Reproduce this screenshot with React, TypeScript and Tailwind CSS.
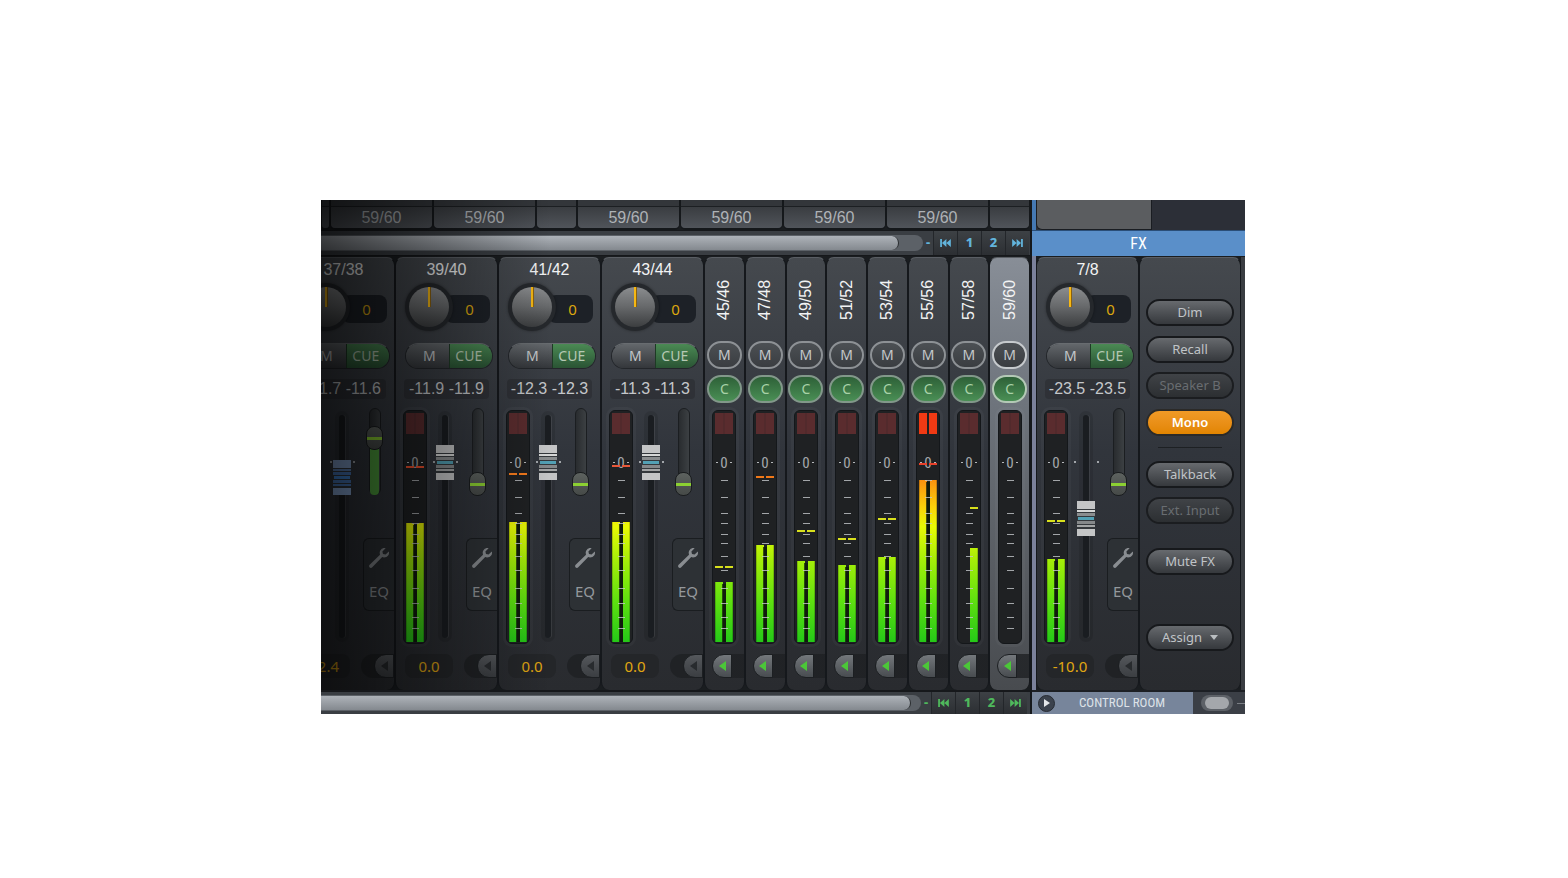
import { useId, useState } from 'react';
import clsx from 'clsx';

type MeterData = { left?: number; right?: number; peakL?: number; peakR?: number; peakColor?: string; clip?: boolean };
type Channel = { name: string; meter?: MeterData };
type WideChannel = Channel & { pan: string; levels: string; gain: string; fader: number; send: number; lit?: boolean; blue?: boolean };

const WIDE: WideChannel[] = [
  { name: '37/38', pan: '0', levels: '-11.7 -11.6', gain: '-2.4', fader: 69, send: 30, lit: true, blue: true },
  { name: '39/40', pan: '0', levels: '-11.9 -11.9', gain: '0.0', fader: 54, send: 76, meter: { left: 111, right: 111, peakL: 55, peakR: 55, peakColor: '#f0502c' } },
  { name: '41/42', pan: '0', levels: '-12.3 -12.3', gain: '0.0', fader: 54, send: 76, meter: { left: 110, right: 110, peakL: 62, peakR: 62, peakColor: '#f87c1c' } },
  { name: '43/44', pan: '0', levels: '-11.3 -11.3', gain: '0.0', fader: 54, send: 76, meter: { left: 110, right: 110, peakL: 54, peakR: 54, peakColor: '#e8583a' } },
];

const NARROW: Channel[] = [
  { name: '45/46', meter: { left: 170, right: 170, peakL: 155, peakR: 155 } },
  { name: '47/48', meter: { left: 133, right: 133, peakL: 65, peakR: 65, peakColor: '#f07818' } },
  { name: '49/50', meter: { left: 149, right: 149, peakL: 119, peakR: 119 } },
  { name: '51/52', meter: { left: 153, right: 153, peakL: 127, peakR: 127 } },
  { name: '53/54', meter: { left: 145, right: 145, peakL: 107, peakR: 107 } },
  { name: '55/56', meter: { left: 68, right: 68, peakL: 52, peakR: 52, peakColor: '#e8402a', clip: true } },
  { name: '57/58', meter: { right: 136, peakR: 96 } },
  { name: '59/60', meter: {} },
];

const MASTER: WideChannel = {
  name: '7/8', pan: '0', levels: '-23.5 -23.5', gain: '-10.0', fader: 110, send: 76,
  meter: { left: 147, right: 147, peakL: 109, peakR: 109 },
};

const TICKS = [69, 86, 102, 112, 123, 132, 145, 159, 177, 192, 206, 217];

const STRIP = 'border-x border-t border-x-[#15181c] border-t-[#5a5e64] rounded-lg flex flex-col';
const STRIP_BG = 'bg-linear-to-b from-[#45494e] via-[#31353c] via-45% to-[#292b2f]';

function Meter({ left, right, peakL, peakR, peakColor = '#d8e01c', clip }: MeterData) {
  const id = useId();
  const clipFill = clip ? '#f03a14' : '#5a2c2e';
  return (
    <div className="w-6 h-[234px] shrink-0 rounded-md border border-[#14171a] bg-[#1f2123] shadow-[0_0_0_3px_#ffffff08] flex justify-center pt-px">
      <svg width="18" height="230" viewBox="0 0 18 230" aria-hidden="true">
        <defs>
          <linearGradient id={id} gradientUnits="userSpaceOnUse" x1="0" y1="65" x2="0" y2="230">
            <stop offset="0" stopColor="#fa8a10" />
            <stop offset="0.18" stopColor="#fbd00a" />
            <stop offset="0.3" stopColor="#e9fa05" />
            <stop offset="0.5" stopColor="#a6ee08" />
            <stop offset="0.75" stopColor="#5fe010" />
            <stop offset="1" stopColor="#25c818" />
          </linearGradient>
        </defs>
        <rect x="0" y="1" width="8" height="21" fill={clipFill} />
        <rect x="10" y="1" width="8" height="21" fill={clipFill} />
        {!clip && <rect x="8" y="1" width="2" height="21" fill="#522a2c" />}
        <text x="9" y="56" textAnchor="middle" fontSize="15" fill="#a4a8ac" className="font-['Roboto_Condensed','Roboto',sans-serif]">0</text>
        <rect x="1" y="50" width="2" height="1" fill="#b5b8bb" />
        <rect x="15" y="50" width="2" height="1" fill="#b5b8bb" />
        {left && (
          <>
            <rect x="0" y={left} width="8" height={230 - left} fill={`url(#${id})`} />
            <rect x="0" y={left} width="1" height={230 - left} fill="#000" opacity="0.2" />
            <rect x="7" y={left + 2} width="4" height={228 - left} fill="#0d1a08" opacity="0.75" />
          </>
        )}
        {right && (
          <>
            <rect x={left ? 11 : 10} y={right} width={left ? 7 : 8} height={230 - right} fill={`url(#${id})`} />
            <rect x="17" y={right} width="1" height={230 - right} fill="#000" opacity="0.2" />
          </>
        )}
        {TICKS.map((y) => (
          <rect key={y} x="6" y={y - 1} width="7" height="1" fill="#c4c8ca" opacity="0.8" />
        ))}
        {peakL && <rect x="0" y={peakL - 1} width="8" height="2" fill={peakColor} />}
        {peakR && <rect x="10" y={peakR - 1} width="8" height="2" fill={peakColor} />}
      </svg>
    </div>
  );
}

function Fader({ label, initial, blue }: { label: string; initial: number; blue?: boolean }) {
  const [pos, setPos] = useState(initial);
  return (
    <div className="relative w-7 h-[232px] ml-1 shrink-0">
      <div className="mx-auto mt-[7px] w-1.5 h-[223px] rounded-sm bg-[#1a1d21] shadow-[0_0_0_4px_#0000001a,1px_0_0_#ffffff18]" />
      <svg className="absolute left-0 top-[53px]" width="28" height="2" aria-hidden="true">
        <circle cx="3" cy="1" r="1" fill="#c9cdd0" />
        <circle cx="26" cy="1" r="1" fill="#c9cdd0" />
      </svg>
      <svg className="absolute left-[5px]" style={{ top: pos - 17 }} width="18" height="35" aria-hidden="true">
        <rect width="18" height="35" fill="#34383c" />
        <rect width="18" height="8" fill={blue ? '#86a4d0' : '#c4c5c6'} />
        <rect y="9" width="18" height="2" fill={blue ? '#5d83b8' : '#d6d7d7'} />
        <rect y="12" width="18" height="3" fill={blue ? '#4a7cc0' : '#8a8d8f'} />
        <rect x="1" y="16" width="16" height="3" fill={blue ? '#4288d8' : '#52a0b4'} />
        <rect y="20" width="18" height="3" fill={blue ? '#4a7cc0' : '#85888a'} />
        <rect y="24" width="18" height="2" fill={blue ? '#4a7cc0' : '#a2a4a5'} />
        <rect y="28" width="18" height="7" fill={blue ? '#8fb0e0' : '#c4c5c6'} />
      </svg>
      <input
        type="range"
        aria-label={`${label} fader`}
        min={17}
        max={213}
        value={pos}
        onChange={(e) => setPos(Number(e.target.value))}
        className="absolute inset-0 w-full h-full opacity-0 [writing-mode:vertical-lr]"
      />
    </div>
  );
}

function SendSlider({ label, initial, lit }: { label: string; initial: number; lit?: boolean }) {
  const [pos, setPos] = useState(initial);
  return (
    <div className="relative w-[17px] h-[89px]">
      <div className="mx-auto w-3 h-[87px] rounded-full border border-[#1b1e21] bg-linear-to-r from-[#292c2f] to-[#3c4043]" />
      {lit && <div className="absolute left-1 w-[9px] bottom-0.5 rounded-b-sm bg-[#4fa03e]" style={{ top: pos }} />}
      <div
        className="absolute left-0 w-[17px] h-6 rounded-lg border border-[#1a1d1f] bg-linear-to-b from-[#5d625f] to-[#464a48] flex items-center"
        style={{ top: pos - 12 }}
      >
        <div className="w-full h-[3px] bg-[#8cd032]" />
      </div>
      <input
        type="range"
        aria-label={`${label} send`}
        min={12}
        max={77}
        value={pos}
        onChange={(e) => setPos(Number(e.target.value))}
        className="absolute inset-0 w-full h-full opacity-0 [writing-mode:vertical-lr]"
      />
    </div>
  );
}

function WrenchIcon() {
  return (
    <svg width="22" height="22" viewBox="0 0 22 22" aria-hidden="true">
      <path
        d="M17.6 1.2 14.4 4.4 15 7 17.6 7.600 20.800 4.400C21.800 7.200 19.600 10.400 16 10.400L14.200 10 4 20.600C2.400 21.800 .2 19.600 1.400 18L12 7.800 11.700 6C11.700 2.600 14.800 .2 17.600 1.200Z"
        fill="#898d91"
      />
    </svg>
  );
}

function ArrowTab({ green, wide }: { green?: boolean; wide?: boolean }) {
  return (
    <button
      type="button"
      aria-label="Expand channel"
      className={clsx(
        'h-6 flex',
        wide ? 'w-[33px] justify-end rounded-l-full bg-[#1e2023]/80' : 'w-full pl-[7px] bg-linear-to-r from-transparent from-50% to-[#1e2023]/80 to-50%',
      )}
    >
      <span
        className={clsx(
          'w-5 h-6 rounded-l-full flex items-center justify-center bg-linear-to-b border border-[#1c1f22]',
          green ? 'from-[#74787c] to-[#484c50]' : 'from-[#55585c] to-[#3b3e42]',
        )}
      >
        <svg width="7" height="10" viewBox="0 0 7 10" aria-hidden="true">
          <path d="M7 0v10L0 5z" fill={green ? '#4bc738' : '#282b2e'} />
        </svg>
      </span>
    </button>
  );
}

function WideStrip({ ch }: { ch: WideChannel }) {
  return (
    <section className={clsx(STRIP, STRIP_BG, 'w-[103px] shrink-0 h-[433px]')}>
      <h2 className="h-6 flex items-center justify-center text-base text-[#f2f3f4]">{ch.name}</h2>

      {/* pan */}
      <div className="flex items-center h-[50px] pl-[9px]">
        <div className="relative z-10 size-12 shrink-0 rounded-full bg-[#25282c] flex items-center justify-center shadow-[0_0_3px_#00000066]">
          <div className="size-10 rounded-full bg-linear-to-b from-[#8b8d8f] via-[#66686a] to-[#3c3e40] flex justify-center">
            <div className="w-[3px] h-5 bg-[#f6b814] border-r border-[#8a6110]" />
          </div>
          <input type="range" aria-label={`${ch.name} pan`} className="absolute inset-0 w-full h-full opacity-0" />
        </div>
        <div className="-ml-2 w-[45px] h-7 mt-1 pl-1 rounded-lg bg-[#1d2127] flex items-center justify-center text-[15px] text-[#dca80e] font-['Noto_Sans',sans-serif]">
          {ch.pan}
        </div>
      </div>

      {/* mute / cue */}
      <div className="mt-[11px] ml-[9px] w-[88px] h-[26px] flex rounded-full overflow-hidden border border-[#23262a] border-t-[#686c70] text-sm font-['Noto_Sans',sans-serif]">
        <button type="button" className="flex-1 pl-1 bg-linear-to-b from-[#63676b] to-[#34373b] text-[#c3c7c9]">M</button>
        <button type="button" className="flex-1 pr-1 border-l border-[#1e3a25] bg-linear-to-b from-[#4b8a54] to-[#2a5434] text-[#b6c9b4]">CUE</button>
      </div>

      <div className="mt-2.5 mx-2 h-5 rounded bg-[#292c30]/60 flex items-center justify-center text-base whitespace-nowrap text-[#c4c7ca]">
        {ch.levels}
      </div>

      <div className="mt-[9px] pl-[7px] h-[236px] flex items-start">
        {ch.meter ? <div className="pt-0.5"><Meter {...ch.meter} /></div> : <div className="w-6 shrink-0" />}
        <Fader label={ch.name} initial={ch.fader} blue={ch.blue} />
        <div className="ml-[7px] flex-1">
          <div className="pl-[3px]">
            <SendSlider label={ch.name} initial={ch.send} lit={ch.lit} />
          </div>
          <div className="mt-[41px] h-[73px] rounded-l-md border border-r-0 border-[#1a1d20] bg-[#2d3135] flex flex-col items-center">
            <button type="button" aria-label="Channel settings" className="mt-2"><WrenchIcon /></button>
            <button type="button" className="mt-3 text-[15px] leading-5 text-[#94989c] font-['Noto_Sans',sans-serif]">EQ</button>
          </div>
        </div>
      </div>

      <div className="mt-2.5 pl-[9px] flex items-center">
        <div className="w-12 h-6 rounded-lg bg-[#242629] flex items-center justify-center text-[15px] text-[#e0a612] font-['Noto_Sans',sans-serif]">
          {ch.gain}
        </div>
        <div className="ml-auto"><ArrowTab wide /></div>
      </div>
    </section>
  );
}

function NarrowStrip({ ch, active }: { ch: Channel; active?: boolean }) {
  const pill = "w-[35px] h-7 rounded-full border-2 bg-linear-to-b text-sm leading-none shrink-0 font-['Noto_Sans',sans-serif]";
  return (
    <section
      className={clsx(
        STRIP,
        'flex-1 min-w-0 items-center h-[433px]',
        active ? 'bg-linear-to-b from-[#888e97] via-[#6d737b] via-35% to-[#484b4f]' : STRIP_BG,
      )}
    >
      <h2 className="h-[83px] flex items-center justify-center text-base text-[#f2f3f4] [writing-mode:vertical-rl] rotate-180">{ch.name}</h2>
      <button type="button" className={clsx(pill, 'from-[#4c5054] to-[#3a3d41] text-[#c5c8ca]', active ? 'border-[#c6cacd]' : 'border-[#8d9195]')}>M</button>
      <button type="button" className={clsx(pill, 'mt-1.5 from-[#2e6138] to-[#4a8f55] text-[#a9d2a8]', active ? 'border-[#b4c9b6]' : 'border-[#82988a]')}>C</button>
      <div className="mt-[7px]"><Meter {...ch.meter} /></div>
      <div className="mt-2.5 w-full"><ArrowTab green /></div>
    </section>
  );
}

function SkipIcon({ back }: { back?: boolean }) {
  return (
    <svg width="11" height="8" viewBox="0 0 12 9" fill="currentColor" className={back ? 'rotate-180' : undefined} aria-hidden="true">
      <path d="M0 0l5 4.500-5 4.500zM5 0l5 4.500-5 4.500zM10 0h2v9h-2z" />
    </svg>
  );
}

function ScrollRow({ green }: { green?: boolean }) {
  const cell = 'w-6 h-full flex items-center justify-center border-l border-[#23262a] bg-linear-to-b from-[#3d4145] to-[#2c2f33]';
  return (
    <div
      className={clsx(
        "flex items-center border-[#16181b] bg-[#3a3e43] text-[13px] font-extrabold font-['Noto_Sans',sans-serif]",
        green ? 'h-6 pr-[3px] border-t-2 text-[#4fb95c]' : 'h-[26px] pr-px border-y text-[#62b4dc]',
      )}
    >
      <div className={clsx('flex-1 h-4 rounded-r-full bg-[#5c6167] flex items-center', green ? 'pr-2.5' : 'pr-6')}>
        <div className="w-full h-3.5 rounded-r-lg border-r border-[#2a2d30] bg-linear-to-b from-[#aeb3b9] to-[#84898f]" />
      </div>
      <span className="w-2.5 text-center">-</span>
      <button type="button" aria-label="First bank" className={cell}><SkipIcon back /></button>
      <button type="button" className={cell}>1</button>
      <button type="button" className={cell}>2</button>
      <button type="button" aria-label="Last bank" className={cell}><SkipIcon /></button>
    </div>
  );
}

function RouteCell({ label, className }: { label?: string; className: string }) {
  return (
    <div className={clsx('h-[30px] shrink-0 rounded-b-md border-x border-b-2 border-[#15181b] bg-[#33363a] pt-1.5', className)}>
      <div className="h-full rounded-b border-t border-[#1c1f22] bg-linear-to-b from-[#3a3d41] to-[#50545a] flex items-center justify-center text-base text-[#aeb2b6]">
        {label}
      </div>
    </div>
  );
}

type RoomTone = 'normal' | 'off' | 'on';

const TONES: Record<RoomTone, string> = {
  normal: 'from-[#676a6e] to-[#36393d] border-[#17191c] text-[#c0c4c7]',
  off: 'from-[#404347] to-[#2c2f32] border-[#1b1d20] text-[#696d71]',
  on: 'from-[#f19a26] to-[#e28500] border-[#2b2a28] text-white font-semibold',
};

function RoomButton({ label, tone = 'normal', className, menu }: { label: string; tone?: RoomTone; className?: string; menu?: boolean }) {
  return (
    <button
      type="button"
      className={clsx(
        "w-[88px] h-[27px] shrink-0 rounded-full border-2 bg-linear-to-b flex items-center justify-center gap-2 text-[13px] font-['Noto_Sans',sans-serif]",
        TONES[tone],
        className,
      )}
    >
      {label}
      {menu && (
        <svg width="8" height="5" viewBox="0 0 8 5" aria-hidden="true"><path d="M0 0h8L4 5z" fill="#b9bdc0" /></svg>
      )}
    </button>
  );
}

export default function App() {
  return (
    <div className="min-h-screen bg-white pt-[200px] pr-0.5 flex items-start justify-center font-['Liberation_Sans',Arial,sans-serif]">
      <main className="w-full max-w-[924px] flex overflow-hidden bg-[#1a1d20]">
        {/* Output channels */}
        <div className="flex-1 min-w-0">
          <div className="relative">
            <div className="flex overflow-hidden">
              <RouteCell className="w-[9px]" />
              <RouteCell className="w-[103px]" label="59/60" />
              <RouteCell className="w-[103px]" label="59/60" />
              <RouteCell className="w-[41px]" />
              <RouteCell className="w-[103px]" label="59/60" />
              <RouteCell className="w-[103px]" label="59/60" />
              <RouteCell className="w-[103px]" label="59/60" />
              <RouteCell className="w-[103px]" label="59/60" />
              <RouteCell className="flex-1" />
            </div>
            <ScrollRow />
            <div className="flex pt-px">
              <div className="w-[74px] shrink-0 flex justify-end overflow-hidden">
                <WideStrip ch={WIDE[0]} />
              </div>
              {WIDE.slice(1).map((ch) => <WideStrip key={ch.name} ch={ch} />)}
              {NARROW.map((ch) => <NarrowStrip key={ch.name} ch={ch} active={ch.name === '59/60'} />)}
            </div>
            {/* left-hand fade */}
            <div className="pointer-events-none absolute inset-y-0 left-0 z-20 w-[230px] bg-linear-to-r from-black/65 via-black/40 via-40% to-transparent" />
          </div>
          <ScrollRow green />
        </div>

        {/* Control room */}
        <div className="w-[215px] shrink-0 border-l-2 border-[#15181c]">
          <div className="border-l-4 border-[#4579b4] bg-[#2c2f37]">
            <div className="h-[30px] w-[116px] rounded-bl-md border border-t-0 border-[#1a1d22] bg-[#5b5d60]" />
          </div>
          <div className="h-[26px] bg-[#5a8fc9] border-t border-[#2a4e78] flex items-center justify-center text-base text-white font-['Roboto_Condensed','Roboto',sans-serif]">
            FX
          </div>
          <div className="flex pt-px border-l-4 border-[#7b819b]">
            <WideStrip ch={MASTER} />
            <section className={clsx(STRIP, STRIP_BG, 'flex-1 items-center h-[433px] pt-[41px]')} aria-label="Control room">
              <RoomButton label="Dim" />
              <RoomButton label="Recall" className="mt-2.5" />
              <RoomButton label="Speaker B" tone="off" className="mt-[9px]" />
              <RoomButton label="Mono" tone="on" className="mt-2.5" />
              <hr className="mt-[11px] w-16 border-[#1d2023]" />
              <RoomButton label="Talkback" className="mt-[13px]" />
              <RoomButton label="Ext. Input" tone="off" className="mt-[9px]" />
              <RoomButton label="Mute FX" className="mt-6" />
              <RoomButton label="Assign" className="mt-[49px]" menu />
            </section>
            <div className="w-1 bg-[#3a3d42]" />
          </div>
          <div className="h-6 border-t-2 border-[#1c1f24] flex">
            <div className="w-[163px] bg-[#77859b] flex items-center">
              <button type="button" aria-label="Show control room" className="ml-1.5 size-[17px] rounded-full bg-[#3b424d] border border-[#262b33] flex items-center justify-center">
                <svg width="6" height="8" viewBox="0 0 6 8" aria-hidden="true"><path d="M0 0l6 4-6 4z" fill="#e4e7ea" /></svg>
              </button>
              <span className="flex-1 pr-3 pl-2 text-center text-[13px] whitespace-nowrap text-[#dde2e8] font-['Roboto_Condensed','Roboto',sans-serif]">CONTROL ROOM</span>
            </div>
            <div className="flex-1 bg-[#3b3f46] flex items-center pl-2">
              <div className="w-8 h-4 rounded-full bg-[#5d6167] flex items-center justify-center">
                <div className="w-6 h-3 rounded-full bg-[#a4a7ab]" />
              </div>
              <span className="ml-1 w-2 h-px bg-[#7a7e84]" />
            </div>
          </div>
        </div>
      </main>
    </div>
  );
}
